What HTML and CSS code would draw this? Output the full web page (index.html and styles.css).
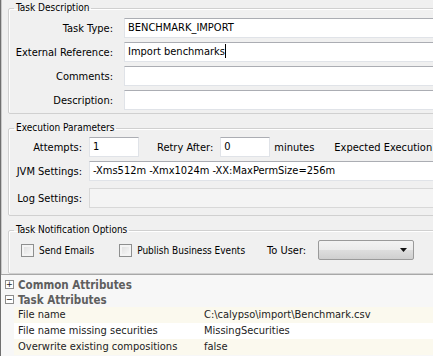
FILE: index.html
```html
<!DOCTYPE html>
<html>
<head>
  <meta charset="UTF-8">
  <title>Task</title>
  <link rel="stylesheet" href="styles.css">
</head>
<body>
  <div class="window">
    <fieldset class="group desc">
      <legend>Task Description</legend>
      <div class="form-grid">
        <label>Task Type:</label>
        <div class="field">BENCHMARK_IMPORT</div>
        <label>External Reference:</label>
        <div class="field">Import benchmarks<span class="caret"></span></div>
        <label>Comments:</label>
        <div class="field"></div>
        <label>Description:</label>
        <div class="field"></div>
      </div>
    </fieldset>

    <fieldset class="group exec">
      <legend>Execution Parameters</legend>
      <div class="form-grid">
        <label>Attempts:</label>
        <div class="inline-row">
          <div class="field small">1</div>
          <label class="retry">Retry After:</label>
          <div class="field small">0</div>
          <span class="unit">minutes</span>
          <span class="expected">Expected Execution</span>
        </div>
        <label>JVM Settings:</label>
        <div class="field">-Xms512m -Xmx1024m -XX:MaxPermSize=256m</div>
        <label class="log">Log Settings:</label>
        <div class="field disabled log"></div>
      </div>
    </fieldset>

    <fieldset class="group notify">
      <legend>Task Notification Options</legend>
      <div class="notify-row">
        <span class="check"></span>
        <span class="check-label">Send Emails</span>
        <span class="check second"></span>
        <span class="check-label">Publish Business Events</span>
        <span class="to-user">To User:</span>
        <div class="combo">
          <svg width="9" height="5" viewBox="0 0 9 5"><path d="M1 0h7L4.5 4z" fill="#111"/></svg>
        </div>
      </div>
    </fieldset>

    <div class="tree">
      <div class="node"><span class="toggle">+</span>Common Attributes</div>
      <div class="node"><span class="toggle">&minus;</span>Task Attributes</div>
      <div class="attr odd"><span class="key">File name</span><span>C:\calypso\import\Benchmark.csv</span></div>
      <div class="attr"><span class="key">File name missing securities</span><span>MissingSecurities</span></div>
      <div class="attr odd"><span class="key">Overwrite existing compositions</span><span>false</span></div>
    </div>
  </div>
</body>
</html>
```

FILE: styles.css
```css
body {
  margin: 0;
  width: 433px;
  height: 356px;
  overflow: hidden;
  background-color: #f0f0f0;
  font-family: 'DejaVu Sans Condensed', 'Liberation Sans', sans-serif;
  font-size: 11px;
  color: #000;
}

.window {
  width: 560px;
  height: 356px;
  border-left: 1px solid #707070;
  box-shadow: inset 1px 0 0 #c9c9c9;
  padding-top: 2px;
  box-sizing: border-box;
}

.group {
  margin: 0 0 8px 7px;
  padding: 0 0 3px 0;
  border: 1px solid #d0d0d0;
  border-radius: 2px;
  box-shadow: inset 1px 1px 0 #fff;
}

.group legend {
  margin-left: 5px;
  padding: 0 2px;
  font-size: 10px;
  line-height: 12px;
}

.form-grid {
  display: grid;
  grid-template-columns: 104px 1fr;
  column-gap: 11px;
  row-gap: 4px;
  padding-top: 4px;
  align-items: center;
}

.form-grid label {
  text-align: right;
}

.field {
  height: 20px;
  box-sizing: border-box;
  background-color: #fff;
  border: 1px solid #e0e3e8;
  border-top-color: #abadb3;
  padding: 0 3px;
  line-height: 18px;
  white-space: nowrap;
}

.field.small {
  width: 50px;
}

.field.disabled {
  background-color: #f4f4f4;
  border-color: #d8d8d8;
}

.caret {
  display: inline-block;
  width: 1px;
  height: 14px;
  background-color: #000;
  vertical-align: -3px;
}

.exec .form-grid {
  grid-template-columns: 73px 1fr;
  column-gap: 7px;
  padding-top: 3px;
}

.exec {
  padding-bottom: 7px;
}

.exec .log {
  margin-top: 3px;
}

.inline-row {
  display: flex;
  align-items: center;
}

.inline-row .retry {
  margin: 0 7px 0 18px;
}

.unit {
  margin-left: 4px;
}

.expected {
  margin-left: 20px;
  white-space: nowrap;
}

.notify {
  margin-bottom: 0;
  padding-bottom: 13px;
}

.notify-row {
  display: flex;
  align-items: center;
  padding: 4px 0 0 12px;
  white-space: nowrap;
}

.check {
  width: 13px;
  height: 13px;
  box-sizing: border-box;
  border: 1px solid #8e8f8f;
  background: linear-gradient(135deg, #dcdcdc, #fbfbfb);
  box-shadow: inset 0 0 0 2px #f4f4f4;
  margin-right: 5px;
}

.check-label {
  font-size: 10px;
}

.check.second {
  margin-left: 25px;
}

.to-user {
  margin: 0 12px 0 22px;
}

.combo {
  width: 96px;
  height: 20px;
  box-sizing: border-box;
  border: 1px solid #9a9a9a;
  border-radius: 2px;
  background: linear-gradient(#f3f3f3, #ebebeb 50%, #dddddd 51%, #cfcfcf);
  display: flex;
  align-items: center;
  justify-content: flex-end;
  padding-right: 5px;
}

.tree {
  border-top: 1px solid #a8a8a8;
  background-color: #f7f7f7;
  padding-top: 2px;
  height: 80px;
}

.node {
  display: flex;
  align-items: center;
  height: 15px;
  padding-left: 4px;
  font-size: 11.5px;
  font-weight: bold;
  color: #5e5e5e;
}

.toggle {
  width: 9px;
  height: 9px;
  box-sizing: border-box;
  border: 1px solid #8c8c8c;
  background-color: #fff;
  font-size: 9px;
  line-height: 7px;
  text-align: center;
  color: #222;
  font-weight: normal;
  margin-right: 4px;
}

.attr {
  display: flex;
  height: 16px;
  line-height: 16px;
  margin-left: 13px;
  padding-left: 4px;
  background-color: #fff;
  color: #222;
}

.attr.odd {
  background-color: #fbf9ee;
}

.key {
  width: 186px;
}
```
